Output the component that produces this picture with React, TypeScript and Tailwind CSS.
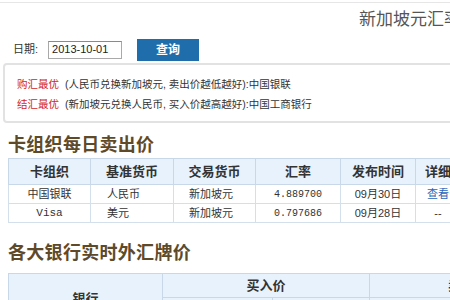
import React from 'react';

const cjk = "font-['Liberation_Sans','Noto_Sans_CJK_SC',sans-serif]";
const mono = "font-['Liberation_Mono','Noto_Sans_CJK_SC',monospace]";

const cardRows = [
  { org: '中国银联', base: '人民币', trade: '新加坡元', rate: '4.889700', date: '09月30日', link: true },
  { org: 'Visa', base: '美元', trade: '新加坡元', rate: '0.797686', date: '09月28日', link: false },
];

const App: React.FC = () => {
  return (
    <div className={`w-[450px] h-[300px] overflow-hidden bg-white text-[#333] ${cjk}`}>
      <div className="mt-[2px] border-t border-[#e6e6e6]" />

      {/* page title, runs past the right edge */}
      <div className="h-[35px] pl-[359px] pt-[6px] text-[17px] leading-[22px] text-[#555] whitespace-nowrap">
        新加坡元汇率查询
      </div>

      <div className="flex items-center h-[23px] pl-[13px] text-[11px]">
        <span className="text-[#333]">日期:</span>
        <div className="ml-[10px] w-[74px] h-[18px] border border-[#a9a9a9] border-t-[#8a8a8a] bg-white pl-[3px] flex items-center text-[11px] text-[#222]">
          2013-10-01
        </div>
        <button className="ml-[15px] w-[62px] h-[22px] bg-[#1f6dab] text-white text-[12px] font-bold flex items-center justify-center">
          查询
        </button>
      </div>

      <div className="mt-[2px] ml-[3px] w-[460px] h-[60px] border-2 border-[#e2e2e2] rounded-[4px] pt-[9px] pl-[12px] text-[10.5px] leading-[20px] whitespace-nowrap">
        <div>
          <span className="text-[#d4261c]">购汇最优</span>
          <span className="ml-[3px]"> (人民币兑换新加坡元, 卖出价越低越好):中国银联</span>
        </div>
        <div>
          <span className="text-[#d4261c]">结汇最优</span>
          <span className="ml-[3px]"> (新加坡元兑换人民币, 买入价越高越好):中国工商银行</span>
        </div>
      </div>

      <h2 className="pl-[8px] pt-[12px] pb-[3px] text-[18px] leading-[20px] font-bold text-[#5e4a29] tracking-[0.3px]">
        卡组织每日卖出价
      </h2>

      <table className="ml-[8px] border-collapse table-fixed w-[452px] text-[11px]">
        <colgroup>
          <col className="w-[82px]" />
          <col className="w-[83px]" />
          <col className="w-[82px]" />
          <col className="w-[85px]" />
          <col className="w-[75px]" />
          <col className="w-[45px]" />
        </colgroup>
        <thead>
          <tr className="h-[26px] bg-[#e8f2fc] text-[13px] font-bold text-[#333]">
            {['卡组织', '基准货币', '交易货币', '汇率', '发布时间', '详细'].map((h) => (
              <th key={h} className="border border-[#c9d8e8] font-bold whitespace-nowrap">{h}</th>
            ))}
          </tr>
        </thead>
        <tbody>
          {cardRows.map((r) => (
            <tr key={r.org} className="h-[19px]">
              <td className={`border border-[#d3dfeb] text-center ${r.org === 'Visa' ? mono : ''}`}>{r.org}</td>
              <td className="border border-[#d3dfeb] pl-[16px]">{r.base}</td>
              <td className="border border-[#d3dfeb] pl-[15px]">{r.trade}</td>
              <td className={`border border-[#d3dfeb] text-center text-[10px] ${mono}`}>{r.rate}</td>
              <td className="border border-[#d3dfeb] text-center">{r.date}</td>
              <td className="border border-[#d3dfeb] text-center whitespace-nowrap">
                {r.link ? <span className="text-[#2a66b8]">查看</span> : <span>--</span>}
              </td>
            </tr>
          ))}
        </tbody>
      </table>

      <h2 className="pl-[8px] pt-[20px] pb-[10px] text-[18px] leading-[20px] font-bold text-[#5e4a29] tracking-[0.3px]">
        各大银行实时外汇牌价
      </h2>

      <table className="ml-[8px] border-collapse table-fixed w-[600px] text-[13px]">
        <colgroup>
          <col className="w-[154px]" />
          <col className="w-[110px]" />
          <col className="w-[97px]" />
          <col className="w-[118px]" />
          <col className="w-[121px]" />
        </colgroup>
        <thead>
          <tr className="h-[24px] bg-[#e8f2fc]">
            <th rowSpan={2} className="border border-[#c9d8e8] font-bold">银行</th>
            <th colSpan={2} className="border border-[#c9d8e8] font-bold">买入价</th>
            <th colSpan={2} className="border border-[#c9d8e8] font-bold text-left pl-[78px]">卖出价</th>
          </tr>
          <tr className="h-[26px] bg-[#e8f2fc]">
            <th className="border border-[#c9d8e8] font-bold">现汇</th>
            <th className="border border-[#c9d8e8] font-bold">现钞</th>
            <th className="border border-[#c9d8e8] font-bold">现汇</th>
            <th className="border border-[#c9d8e8] font-bold">现钞</th>
          </tr>
        </thead>
      </table>
    </div>
  );
};

export default App;
